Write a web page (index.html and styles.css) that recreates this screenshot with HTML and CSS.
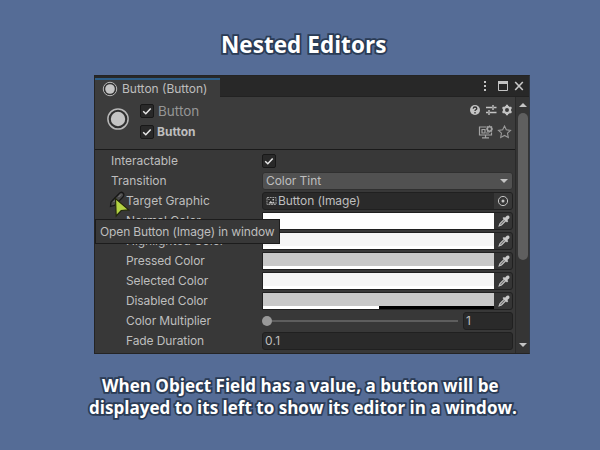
FILE: index.html
```html
<!DOCTYPE html>
<html lang="en">
<head>
<meta charset="utf-8">
<title>Nested Editors</title>
<link rel="stylesheet" href="styles.css">
</head>
<body>
<svg class="defs" aria-hidden="true">
  <symbol id="disc" viewBox="0 0 24 24"><circle cx="12" cy="12" r="10.1" fill="#303030" stroke="#b8b8b8" stroke-width="1.5"/><circle cx="12" cy="12" r="7.2" fill="#c4c4c4"/></symbol>
  <symbol id="check" viewBox="0 0 14 14"><path d="M3.2 7.2 5.8 9.7 10.7 4.4" fill="none" stroke="#e8e8e8" stroke-width="1.5"/></symbol>
  <symbol id="dropper" viewBox="0 0 12 12"><path d="M1.2 10.8 2 8.5 6.3 4.2 7.8 5.7 3.5 10Z" fill="#666" stroke="#c4c4c4" stroke-width="1.1"/><path d="M4.5 3 6 2l1 .7L8.5 1C9.8-.2 12.2.8 11.3 3.2L9.4 5l.8 1.2L9 7.6Z" fill="#c8c8c8"/></symbol>
</svg>
<h1 class="title">Nested Editors</h1>
<main class="window">
  <header class="tabs">
    <div class="tab"><svg class="tab-icon"><use href="#disc"/></svg><span>Button (Button)</span></div>
    <svg class="window-tools" viewBox="0 0 48 16"><path d="M4 3h2v2H4zM4 7h2v2H4zM4 11h2v2H4z" fill="#c4c4c4"/><path d="M18.5 3.5h9v9h-9z" fill="none" stroke="#c4c4c4"/><path d="M18 3h10v3H18z" fill="#c4c4c4"/><path d="m35.2 4 7.6 8M42.8 4l-7.6 8" stroke="#c8c8c8" stroke-width="1.6"/></svg>
  </header>
  <div class="body">
    <div class="content">
      <section class="object-head">
        <svg class="object-icon"><use href="#disc"/></svg>
        <div class="names">
          <div class="name"><i class="check"><svg><use href="#check"/></svg></i><span class="object-name">Button</span></div>
          <div class="name"><i class="check"><svg><use href="#check"/></svg></i><b class="component-name">Button</b></div>
        </div>
        <div class="head-tools">
          <svg class="tools-top" viewBox="0 0 44 12"><circle cx="6" cy="6" r="5" fill="#c4c4c4"/><path d="M4.2 4.8Q4.3 3 6 3q1.8 0 1.8 1.5C7.8 5.8 6 5.8 6 7M6 8v1.4" fill="none" stroke="#333" stroke-width="1.3"/><path d="M17 3.5h6M25 3.5h2.5M24 1v5M17 8.5h2M21 8.5h6.5M20 6v5" stroke="#c4c4c4" stroke-width="1.4"/><circle cx="38" cy="6" r="3.1" fill="none" stroke="#c4c4c4" stroke-width="2.2"/><path d="M38 .8v2M38 9.2v2M33.5 3.4l1.7 1M40.8 7.6l1.7 1M33.5 8.6l1.7-1M40.8 4.4l1.7-1" stroke="#c4c4c4" stroke-width="2.2"/></svg>
          <svg class="tools-bottom" viewBox="0 0 34 14"><path d="M8.5 2H1.5v8h12V7.5M4 12.8h7M7.5 10v2.5M4 4.5h3v3.5H4zM8 8h3" fill="none" stroke="#a4a4a4" stroke-width="1.2"/><circle cx="11.5" cy="4" r="2.2" fill="none" stroke="#a4a4a4" stroke-width="1.6"/><path d="M11.5.4v1M11.5 6.5v1M8 4h1M14 4h1M9 1.5l1 1M13 5.5l1 1M14 1.5l-1 1M10 5.5l-1 1" stroke="#a4a4a4" stroke-width="1.2"/><path d="m26.5 1 1.8 3.8 4.2.6-3 2.8.8 4.3-3.8-2.1-3.8 2.1.8-4.3-3-2.8 4.2-.6Z" fill="none" stroke="#999" stroke-width="1.1"/></svg>
        </div>
      </section>
      <section class="fields">
        <div class="row"><label>Interactable</label><i class="check"><svg><use href="#check"/></svg></i></div>
        <div class="row"><label>Transition</label><div class="field select"><span>Color Tint</span><i class="caret"></i></div></div>
        <div class="row nested"><label>Target Graphic</label><div class="field object"><svg class="image-icon" viewBox="0 0 11 10"><path d="M1 1.5h9v7H1z" fill="none" stroke="#aaa" stroke-width=".9" stroke-dasharray="2 .7"/><path d="m2.5 7.5 2-2.5 2 1.5 1-1 1.5 2ZM6.5 3h1.5v1.5H6.5zM2.5 3h1v1h-1z" fill="#c4c4c4"/></svg><span class="object-value">Button (Image)</span><svg class="picker" viewBox="0 0 18 16"><circle cx="9" cy="8" r="4.6" fill="none" stroke="#c4c4c4"/><circle cx="9" cy="8" r="1.5" fill="#c4c4c4"/></svg></div></div>
        <div class="row nested"><label>Normal Color</label><div class="field color"><i class="swatch white"></i><svg><use href="#dropper"/></svg></div></div>
        <div class="row nested"><label>Highlighted Color</label><div class="field color"><i class="swatch pale"></i><svg><use href="#dropper"/></svg></div></div>
        <div class="row nested"><label>Pressed Color</label><div class="field color"><i class="swatch gray"></i><svg><use href="#dropper"/></svg></div></div>
        <div class="row nested"><label>Selected Color</label><div class="field color"><i class="swatch pale"></i><svg><use href="#dropper"/></svg></div></div>
        <div class="row nested"><label>Disabled Color</label><div class="field color"><i class="swatch gray half"></i><svg><use href="#dropper"/></svg></div></div>
        <div class="row nested"><label>Color Multiplier</label><div class="slider"><i class="knob"></i><i class="track"></i></div><div class="field number">1</div></div>
        <div class="row nested"><label>Fade Duration</label><div class="field input">0.1</div></div>
      </section>
    </div>
    <aside class="scrollbar"><i class="up"></i><i class="thumb"></i><i class="down"></i></aside>
  </div>
  <div class="tooltip"><span>Open Button (Image) in window</span></div>
  <svg class="cursor" viewBox="0 0 24 28"><path d="M2 12 9.5 4.2Q12 1 14 3t-.5 4.5l-8 8-4 1Z" fill="#484848" stroke="#171717" stroke-width="1.3"/><path d="m4.5 12 3-3m2-2L12 4.5" stroke="#858585"/><path d="m6.5 8.5.7 17.5 5-5.5 7.5-.6Z" fill="#b3d343" stroke="#22270c" stroke-width="1.2"/></svg>
</main>
<p class="caption"><span class="line-one">When Object Field has a value, a button will be</span><span class="line-two">displayed to its left to show its editor in a window.</span></p>
</body>
</html>
```
FILE: styles.css
```css
* { box-sizing: border-box; }
body { margin: 0; width: 600px; height: 450px; overflow: hidden; background: #556c96; font: 12px/18px Inter, sans-serif; color: #bebebe; }
svg { display: block; flex: none; }
.defs { display: none; }
.title, .caption { font-family: "Open Sans", sans-serif; font-weight: 700; color: #fff; -webkit-text-stroke: 3.6px #2a3b55; paint-order: stroke fill; stroke-linejoin: round; white-space: nowrap; }
.title { margin: 0; height: 75px; padding: 29px 0 0 221px; font-size: 22.5px; line-height: 32px; letter-spacing: .05px; }
.window { position: relative; width: 436px; height: 279px; margin-left: 94px; border: 1px solid #242424; border-right-color: #303743; background: #383838; display: flex; flex-direction: column; }
.tabs { height: 21px; flex: none; display: flex; justify-content: space-between; background: #282828; border-bottom: 1px solid #222; padding-top: 2px; }
.tab { width: 125px; height: 19px; background: #3c3c3c; border-top: 2px solid #2c5d87; display: flex; align-items: center; padding-left: 7px; gap: 4px; white-space: nowrap; }
.tab-icon { width: 16px; height: 16px; }
.window-tools { width: 48px; height: 16px; margin-right: 1px; }
.body { display: flex; flex: 1; min-height: 0; }
.content { width: 420px; overflow: hidden; }
.object-head { height: 53px; background: #3c3c3c; border-bottom: 1px solid #1a1a1a; display: flex; }
.object-icon { width: 24px; height: 24px; margin: 10px 0 0 11px; }
.names { margin: 3px 0 0 10px; flex: 1; }
.name { height: 21px; display: flex; align-items: center; gap: 4px; }
.object-name { font-size: 13.5px; color: #969696; }
.component-name { font-size: 12px; font-weight: 700; margin-left: -1px; }
.check { width: 14px; height: 14px; background: #292929; border: 1px solid #181818; border-radius: 2px; display: block; flex: none; }
.check svg { width: 14px; height: 14px; margin: -1px; }
.head-tools { width: 46px; padding-top: 7px; }
.tools-top { width: 44px; height: 12px; }
.tools-bottom { width: 34px; height: 14px; margin: 9px 0 0 9px; }
.fields { padding-top: 1px; }
.row { height: 20px; display: flex; align-items: center; }
.row label { width: 167px; padding-left: 16px; white-space: nowrap; flex: none; letter-spacing: -.02px; }
.row.nested label { padding-left: 31px; }
.row.nested:nth-child(n+6) label { letter-spacing: -.1px; }
.field { width: 251px; height: 18px; border: 1px solid #202020; border-radius: 3px; background: #2a2a2a; display: flex; align-items: center; overflow: hidden; flex: none; line-height: 16px; }
.select { background: #515151; border-color: #303030; padding: 0 4px 0 3px; justify-content: space-between; letter-spacing: -.06px; }
.caret, .up, .down { width: 0; height: 0; border: 4px solid transparent; border-top-color: #c4c4c4; border-bottom: 0; }
.object { padding-left: 3px; }
.object-value { letter-spacing: -.08px; }
.image-icon { width: 11px; height: 10px; margin-right: 1px; }
.picker { width: 18px; height: 16px; margin-left: auto; background: #373737; }
.color { background: #353535; border-radius: 1px 3px 3px 1px; }
.swatch { width: 231px; height: 16px; flex: none; border-bottom: 3px solid #fff; }
.white { background: #fff; }
.pale { background: #f5f5f5; }
.gray { background: #c8c8c8; }
.half { border: 0; background: linear-gradient(90deg, #fff 50.4%, #000 50.4%) 0 13px / 100% 3px no-repeat, #c8c8c8; }
.color svg { width: 12px; height: 12px; margin-left: 4px; }
.slider { width: 196px; margin-right: 5px; display: flex; align-items: center; }
.knob { width: 10px; height: 10px; border-radius: 50%; background: #999; }
.track { width: 186px; height: 2px; background: #5e5e5e; }
.number { width: 50px; padding-left: 2px; }
.input { padding-left: 2px; letter-spacing: .25px; }
.scrollbar { width: 14px; margin-left: auto; background: #353535; border-left: 1px solid #2a2a2a; display: flex; flex-direction: column; align-items: center; }
.up { border-top: 0; border-bottom: 4px solid #c4c4c4; margin-top: 6px; }
.thumb { width: 10px; height: 147px; margin-top: 6px; border-radius: 5px; background: #5f5f5f; }
.down { margin-top: 83px; }
.tooltip { position: absolute; left: 0; top: 143px; width: 185px; height: 25px; padding-left: 4px; border: 1px solid #1c1c1c; background: #383838; line-height: 24px; white-space: nowrap; letter-spacing: -.13px; }
.cursor { position: absolute; left: 14px; top: 114px; width: 24px; height: 28px; }
.caption { margin: 21px 0 0; font-size: 17px; line-height: 22px; letter-spacing: .02px; }
.caption span { display: block; }
.line-one { padding-left: 102px; }
.line-two { padding-left: 89px; }
```
